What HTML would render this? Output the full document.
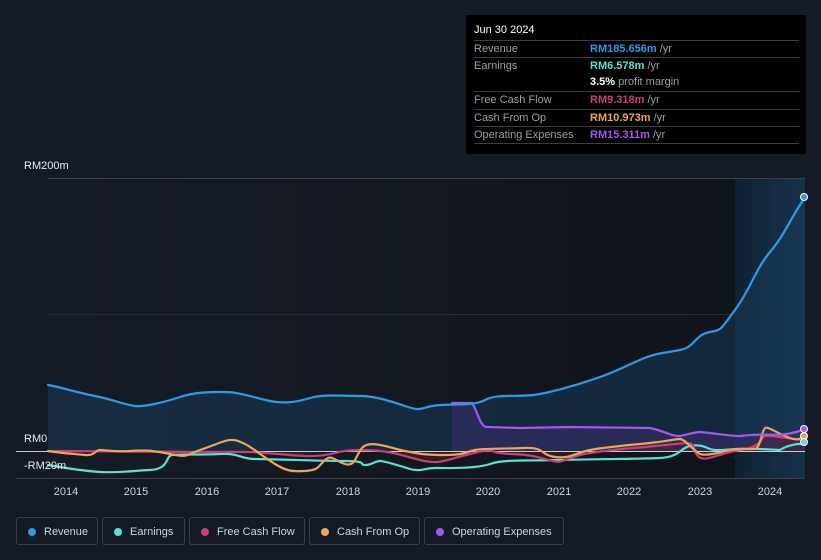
<!DOCTYPE html>
<html><head><meta charset="utf-8"><style>
html,body{margin:0;padding:0;background:#151b26;width:821px;height:560px;overflow:hidden;font-family:"Liberation Sans",sans-serif}
.tt{position:absolute;left:466px;top:15px;width:340px;height:139px;background:#000;border-radius:2px;color:#9aa0a6;font-size:11px}
.tt .h{position:absolute;left:8px;top:9px;color:#fff;font-size:11px}
.row{position:absolute;left:8px;width:325px;border-top:1px solid #3a3d44;height:17px;line-height:17px}
.row span{position:absolute;left:116px;font-weight:bold}
.row i{font-style:normal;color:#9aa0a6;font-weight:normal}
.leg{position:absolute;top:517px;height:28px;border:1px solid #3a3f4a;border-radius:3px;color:#d0d4da;font-size:11px;line-height:28px;box-sizing:border-box;padding-left:27px}
.leg b{position:absolute;left:11px;top:10px;width:8px;height:8px;border-radius:50%}
.lab{position:absolute;color:#e8eaed;font-size:11px}
</style></head><body>
<svg width="821" height="560" style="position:absolute;left:0;top:0">
<defs>
<linearGradient id="bg" x1="0" x2="1"><stop offset="0" stop-color="#161c27"/><stop offset="1" stop-color="#0f131a"/></linearGradient>
<linearGradient id="hl" x1="0" x2="1"><stop offset="0" stop-color="#0f2233"/><stop offset="1" stop-color="#16334b"/></linearGradient>
</defs>
<rect x="48" y="178" width="687" height="300" fill="url(#bg)"/>
<rect x="735" y="178" width="70" height="300" fill="url(#hl)"/>
<line x1="48" y1="178.5" x2="805" y2="178.5" stroke="#3c414b"/>
<line x1="48" y1="314.5" x2="805" y2="314.5" stroke="#262b35"/>
<line x1="16" y1="478.5" x2="805" y2="478.5" stroke="#3c414b"/>
<path d="M48,385 C60,387 75,392 95,396 S125,405 135,406 S165,402 180,397 S210,392 225,392 S255,398 270,401 S297,402 310,398 S345,396 360,396 S390,401 405,406 S418,409 432,406 S472,407 485,400 S520,398 540,394 S580,384 600,377 S635,361 650,356 S680,352 688,347 S698,334 710,332 S720,330 735,310 S755,270 770,252 S785,228 805,197 L805,451 L48,451Z" fill="#1a3a57" fill-opacity="0.55"/>
<path d="M452,403 L472,403 C478,412 480,427 487,427 L520,428 570,427 650,428 C665,431 670,436 680,436 C690,434 695,432 700,432 C720,434 730,436 740,436 C750,435 760,434 780,435 C795,433 800,431 805,429 L805,451 L452,451Z" fill="#3b2e6e" fill-opacity="0.5"/>
<path d="M48,451 L805,451 L805,440 C780,438 770,436 765,436 C745,448 725,452 715,454 C700,455 695,452 688,446 C675,444 650,447 610,452 C580,455 570,459 560,460 C545,459 525,453 500,453 C487,451 470,454 445,460 C420,460 400,455 360,450 C330,450 300,455 290,455 C260,452 245,451 200,452 C150,452 100,451 48,451Z" fill="#5a1f2e" fill-opacity="0.45"/>
<line x1="16" y1="451.5" x2="805" y2="451.5" stroke="#c8ccd2" stroke-width="1"/>
<g fill="none" stroke-width="2.2" stroke-linejoin="round" stroke-linecap="round">
<path stroke="#5ce0cf" d="M48,465 C65,468 85,471 100,472 S130,471 150,470 S165,456 172,455 S200,455 220,454 S240,459 255,459 S320,461 345,461 S358,465 365,465 S375,461 380,461 S400,466 410,469 S425,468 435,468 S475,469 490,464 S530,461 560,460 S640,459 660,458 S680,448 690,446 S705,447 710,449 S725,450 735,449 S780,450 780,450 S790,443 805,444"/>
<path stroke="#c8407a" d="M48,451 C100,451 150,452 200,452 S245,451 290,455 S330,450 360,450 S400,455 420,460 S445,460 470,454 S487,451 500,453 S525,453 545,459 S560,460 580,455 S650,447 675,444 S690,446 697,455 S715,454 740,450 S760,437 765,436 S790,439 805,440"/>
<path stroke="#e9a75a" d="M48,451 C60,453 75,454 85,455 S95,450 100,450 S115,452 130,451 S150,450 170,454 S185,455 200,450 S215,444 225,441 S240,442 245,444 S265,458 275,464 S290,472 305,471 S318,466 325,460 S335,461 345,464 S355,457 362,448 S390,448 405,451 S425,455 445,455 S465,452 475,450 S505,449 525,448 S540,455 555,457 S575,453 590,450 S630,445 650,443 S675,439 680,439 S695,452 700,454 S720,453 725,451 S750,449 755,449 S762,430 765,428 S778,434 790,438 S800,436 805,436"/>
<path stroke="#a259f0" d="M452,403 L472,403 C478,412 480,427 487,427 L520,428 570,427 650,428 C665,431 670,436 680,436 C690,434 695,432 700,432 C720,434 730,436 740,436 C750,435 760,434 780,435 C795,433 800,431 805,429"/>
<path stroke="#2f9ae6" d="M48,385 C60,387 75,392 95,396 S125,405 135,406 S165,402 180,397 S210,392 225,392 S255,398 270,401 S297,402 310,398 S345,396 360,396 S390,401 405,406 S418,409 432,406 S472,407 485,400 S520,398 540,394 S580,384 600,377 S635,361 650,356 S680,352 688,347 S698,334 710,332 S720,330 735,310 S755,270 770,252 S785,228 805,197"/>
</g>
<circle cx="804" cy="197" r="3.5" fill="#2f9ae6" stroke="#fff" stroke-width="1"/>
<circle cx="804" cy="429" r="3.5" fill="#a259f0" stroke="#fff" stroke-width="1"/>
<circle cx="804" cy="436" r="3.5" fill="#e9a75a" stroke="#fff" stroke-width="1"/>
<circle cx="804" cy="442" r="3.5" fill="#5ce0cf" stroke="#fff" stroke-width="1"/>
<g fill="#d0d4da" font-size="11" font-family="Liberation Sans,sans-serif" text-anchor="middle">
<text x="66" y="495">2014</text><text x="136" y="495">2015</text><text x="207" y="495">2016</text><text x="277" y="495">2017</text><text x="348" y="495">2018</text><text x="418" y="495">2019</text><text x="488" y="495">2020</text><text x="559" y="495">2021</text><text x="629" y="495">2022</text><text x="700" y="495">2023</text><text x="770" y="495">2024</text>
</g>
</svg>
<div class="lab" style="left:24px;top:160px">RM200m</div>
<div class="lab" style="left:24px;top:433px">RM0</div>
<div class="lab" style="left:24px;top:460px">-RM20m</div>
<div class="tt">
<div class="h">Jun 30 2024</div>
<div class="row" style="top:25px">Revenue<span style="color:#2f9ae6">RM185.656m <i>/yr</i></span></div>
<div class="row" style="top:42px">Earnings<span style="color:#5ce0cf">RM6.578m <i>/yr</i></span></div>
<div class="row" style="top:59px;border-top:none"><span style="color:#fff">3.5% <i>profit margin</i></span></div>
<div class="row" style="top:76px">Free Cash Flow<span style="color:#c8407a">RM9.318m <i>/yr</i></span></div>
<div class="row" style="top:94px">Cash From Op<span style="color:#e9a75a">RM10.973m <i>/yr</i></span></div>
<div class="row" style="top:111px">Operating Expenses<span style="color:#a259f0">RM15.311m <i>/yr</i></span></div>
<div class="row" style="top:128px;height:0"></div>
</div>
<div class="leg" style="left:16px;width:82px"><b style="background:#2f9ae6"></b>Revenue</div>
<div class="leg" style="left:102px;width:83px"><b style="background:#5ce0cf"></b>Earnings</div>
<div class="leg" style="left:189px;width:116px"><b style="background:#c8407a"></b>Free Cash Flow</div>
<div class="leg" style="left:309px;width:111px"><b style="background:#e9a75a"></b>Cash From Op</div>
<div class="leg" style="left:424px;width:140px"><b style="background:#a259f0"></b>Operating Expenses</div>
</body></html>
